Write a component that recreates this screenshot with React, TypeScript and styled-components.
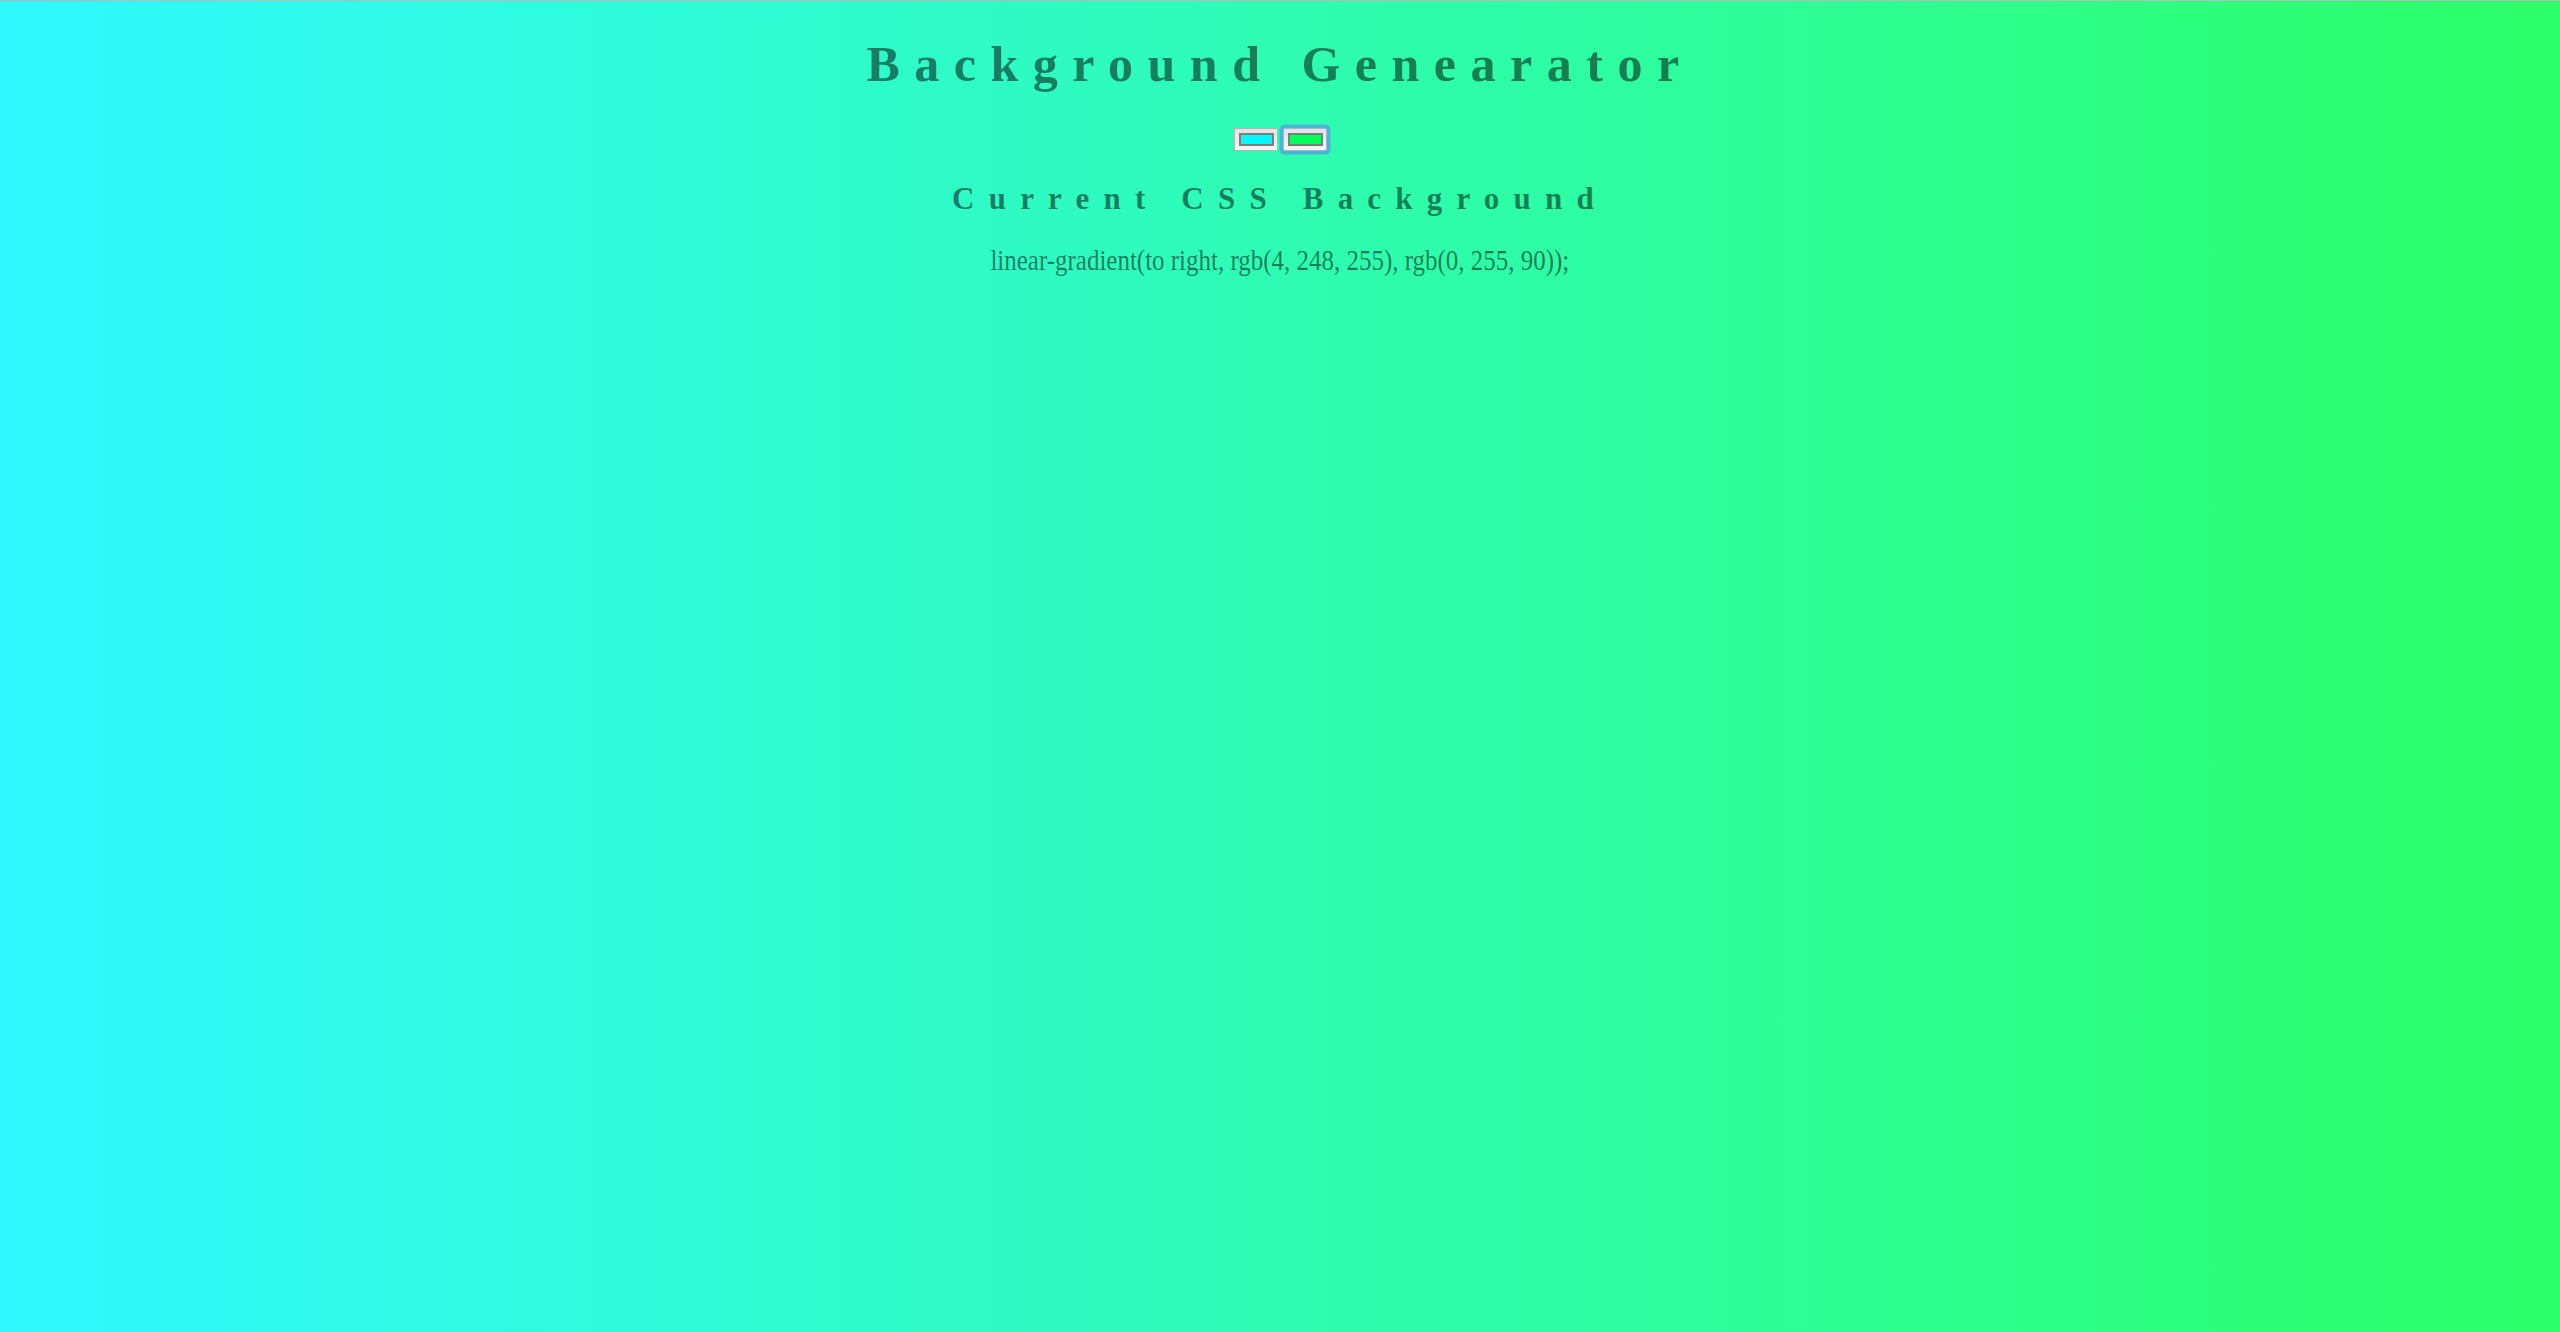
import React from "react";
import styled, { createGlobalStyle } from "styled-components";

const Global = createGlobalStyle`
  html, body { margin: 0; padding: 0; }
  body { font-family: "Liberation Serif", "Times New Roman", serif; }
`;

const Page = styled.div`
  min-height: 1332px;
  box-sizing: border-box;
  border-top: 1px solid #b9b9b9;
  padding-top: 33px;
  background: linear-gradient(to right, #2ff9ff, #2cff68);
  display: flex;
  flex-direction: column;
  align-items: center;
  color: rgba(0, 0, 0, 0.5);
  font-family: "Liberation Serif", "Times New Roman", serif;
`;

const Title = styled.h1`
  margin: 0;
  font-size: 50px;
  line-height: 60px;
  font-weight: bold;
  letter-spacing: 14.5px;
  text-align: center;
`;

const Pickers = styled.div`
  display: flex;
  gap: 5px;
  margin-top: 34px;
  height: 23px;
`;

const ColorInput = styled.input<{ $focused?: boolean }>`
  -webkit-appearance: none;
  appearance: none;
  width: 44px;
  height: 23px;
  box-sizing: border-box;
  margin: 0;
  padding: 0;
  border: 1px solid ${(p) => (p.$focused ? "#9fb6d8" : "#b3b3b3")};
  border-radius: ${(p) => (p.$focused ? "2px" : "0")};
  background: linear-gradient(#e2e2e2, #f6f6f6);
  box-shadow: ${(p) => (p.$focused ? "0 0 0 3.5px rgba(80, 165, 220, 0.82)" : "none")};
  cursor: pointer;
  &::-webkit-color-swatch-wrapper {
    padding: 4px 3px 4px 4px;
  }
  &::-webkit-color-swatch {
    border: 2px solid #7d7d7d;
    border-radius: 0;
  }
`;

const Subtitle = styled.h3`
  margin: 27.5px 0 0;
  font-size: 31px;
  line-height: 40px;
  font-weight: bold;
  letter-spacing: 14.2px;
  text-align: center;
`;

const CssLine = styled.h3`
  margin: 21.5px 0 0;
  font-size: 30px;
  line-height: 40px;
  font-weight: normal;
  display: inline-block;
  transform: scaleX(0.832);
  transform-origin: center;
  white-space: nowrap;
`;

export default function App() {
  const c1 = "#04f8ff";
  const c2 = "#00ff5a";
  return (
    <>
      <Global />
      <Page>
        <Title>Background Genearator</Title>
        <Pickers>
          <ColorInput type="color" defaultValue={c1} />
          <ColorInput type="color" defaultValue={c2} $focused />
        </Pickers>
        <Subtitle>Current CSS Background</Subtitle>
        <CssLine>linear-gradient(to right, rgb(4, 248, 255), rgb(0, 255, 90));</CssLine>
      </Page>
    </>
  );
}
